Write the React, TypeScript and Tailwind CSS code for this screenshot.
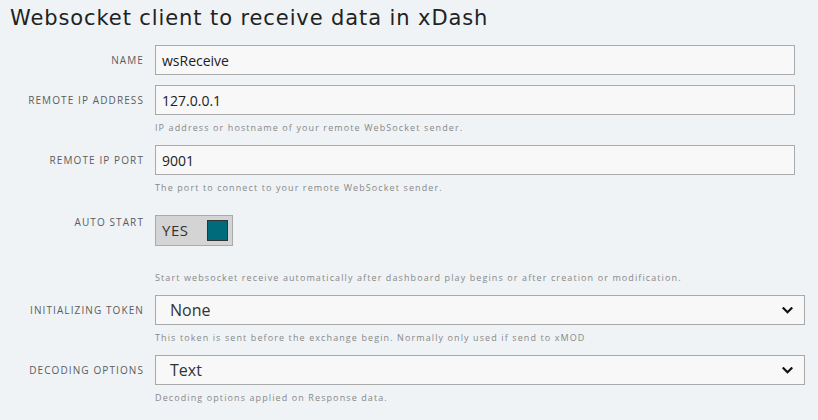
import React from "react";

function Chevron() {
  return (
    <svg width="11" height="7" viewBox="0 0 11 7" className="shrink-0">
      <path d="M1.5 1.3 L5.5 5.2 L9.5 1.3" fill="none" stroke="#111" strokeWidth="2.2" strokeLinecap="square" />
    </svg>
  );
}

function Label({ children, top }: { children: React.ReactNode; top?: boolean }) {
  return (
    <div
      className={
        "w-[155px] shrink-0 pr-[11px] flex justify-end text-[10px] tracking-[1.1px] uppercase text-[#5c5c5c] " +
        (top ? "items-start pt-[1px] leading-[12px]" : "items-center h-[30px]")
      }
    >
      {children}
    </div>
  );
}

function Help({ children, className = "" }: { children: React.ReactNode; className?: string }) {
  return (
    <div className={"h-[12px] leading-[12px] text-[9px] tracking-[1.1px] text-[#888] " + className}>{children}</div>
  );
}

function TextField({ value }: { value: string }) {
  return (
    <div className="h-[30px] mr-[10px] bg-[#f8f8f8] border border-[#aaa] flex items-center pl-[6px] text-[14px] text-[#222]">
      {value}
    </div>
  );
}

function SelectField({ value }: { value: string }) {
  return (
    <div className="h-[30px] bg-[#f8f8f8] border border-[#aaa] flex items-center justify-between pl-[14px] pr-[11px] text-[16px] text-[#333]">
      <span>{value}</span>
      <Chevron />
    </div>
  );
}

export default function App() {
  return (
    <div className="w-[818px] h-[420px] bg-[#eff3f6] overflow-hidden font-['Open_Sans',sans-serif]">
      <h1 className="pl-[10px] pt-[6px] h-[45px] text-[21px] leading-[25px] text-[#222] font-['DejaVu_Sans',sans-serif] tracking-[0.9px]">
        Websocket client to receive data in xDash
      </h1>

      <div className="flex pr-[13px]">
        <Label>Name</Label>
        <div className="flex-1">
          <TextField value="wsReceive" />
        </div>
      </div>

      <div className="flex pr-[13px] mt-[10px]">
        <Label>Remote IP address</Label>
        <div className="flex-1">
          <TextField value="127.0.0.1" />
          <Help className="mt-[7px]">IP address or hostname of your remote WebSocket sender.</Help>
        </div>
      </div>

      <div className="flex pr-[13px] mt-[11px]">
        <Label>Remote IP port</Label>
        <div className="flex-1">
          <TextField value="9001" />
          <Help className="mt-[7px]">The port to connect to your remote WebSocket sender.</Help>
        </div>
      </div>

      <div className="flex pr-[13px] mt-[21px]">
        <Label top>Auto start</Label>
        <div className="flex-1">
          <div className="w-[78px] h-[31px] bg-[#d4d4d4] border border-[#aaa] flex items-center pl-[6px]">
            <span className="text-[15px] text-[#333] tracking-[0.5px]">YES</span>
            <span className="ml-auto mr-[4px] w-[21px] h-[21px] bg-[#006b7b] border border-[#333]" />
          </div>
          <Help className="mt-[26px]">
            Start websocket receive automatically after dashboard play begins or after creation or modification.
          </Help>
        </div>
      </div>

      <div className="flex pr-[13px] mt-[11px]">
        <Label>Initializing token</Label>
        <div className="flex-1">
          <SelectField value="None" />
          <Help className="mt-[7px]">This token is sent before the exchange begin. Normally only used if send to xMOD</Help>
        </div>
      </div>

      <div className="flex pr-[13px] mt-[11px]">
        <Label>Decoding options</Label>
        <div className="flex-1">
          <SelectField value="Text" />
          <Help className="mt-[7px]">Decoding options applied on Response data.</Help>
        </div>
      </div>
    </div>
  );
}
